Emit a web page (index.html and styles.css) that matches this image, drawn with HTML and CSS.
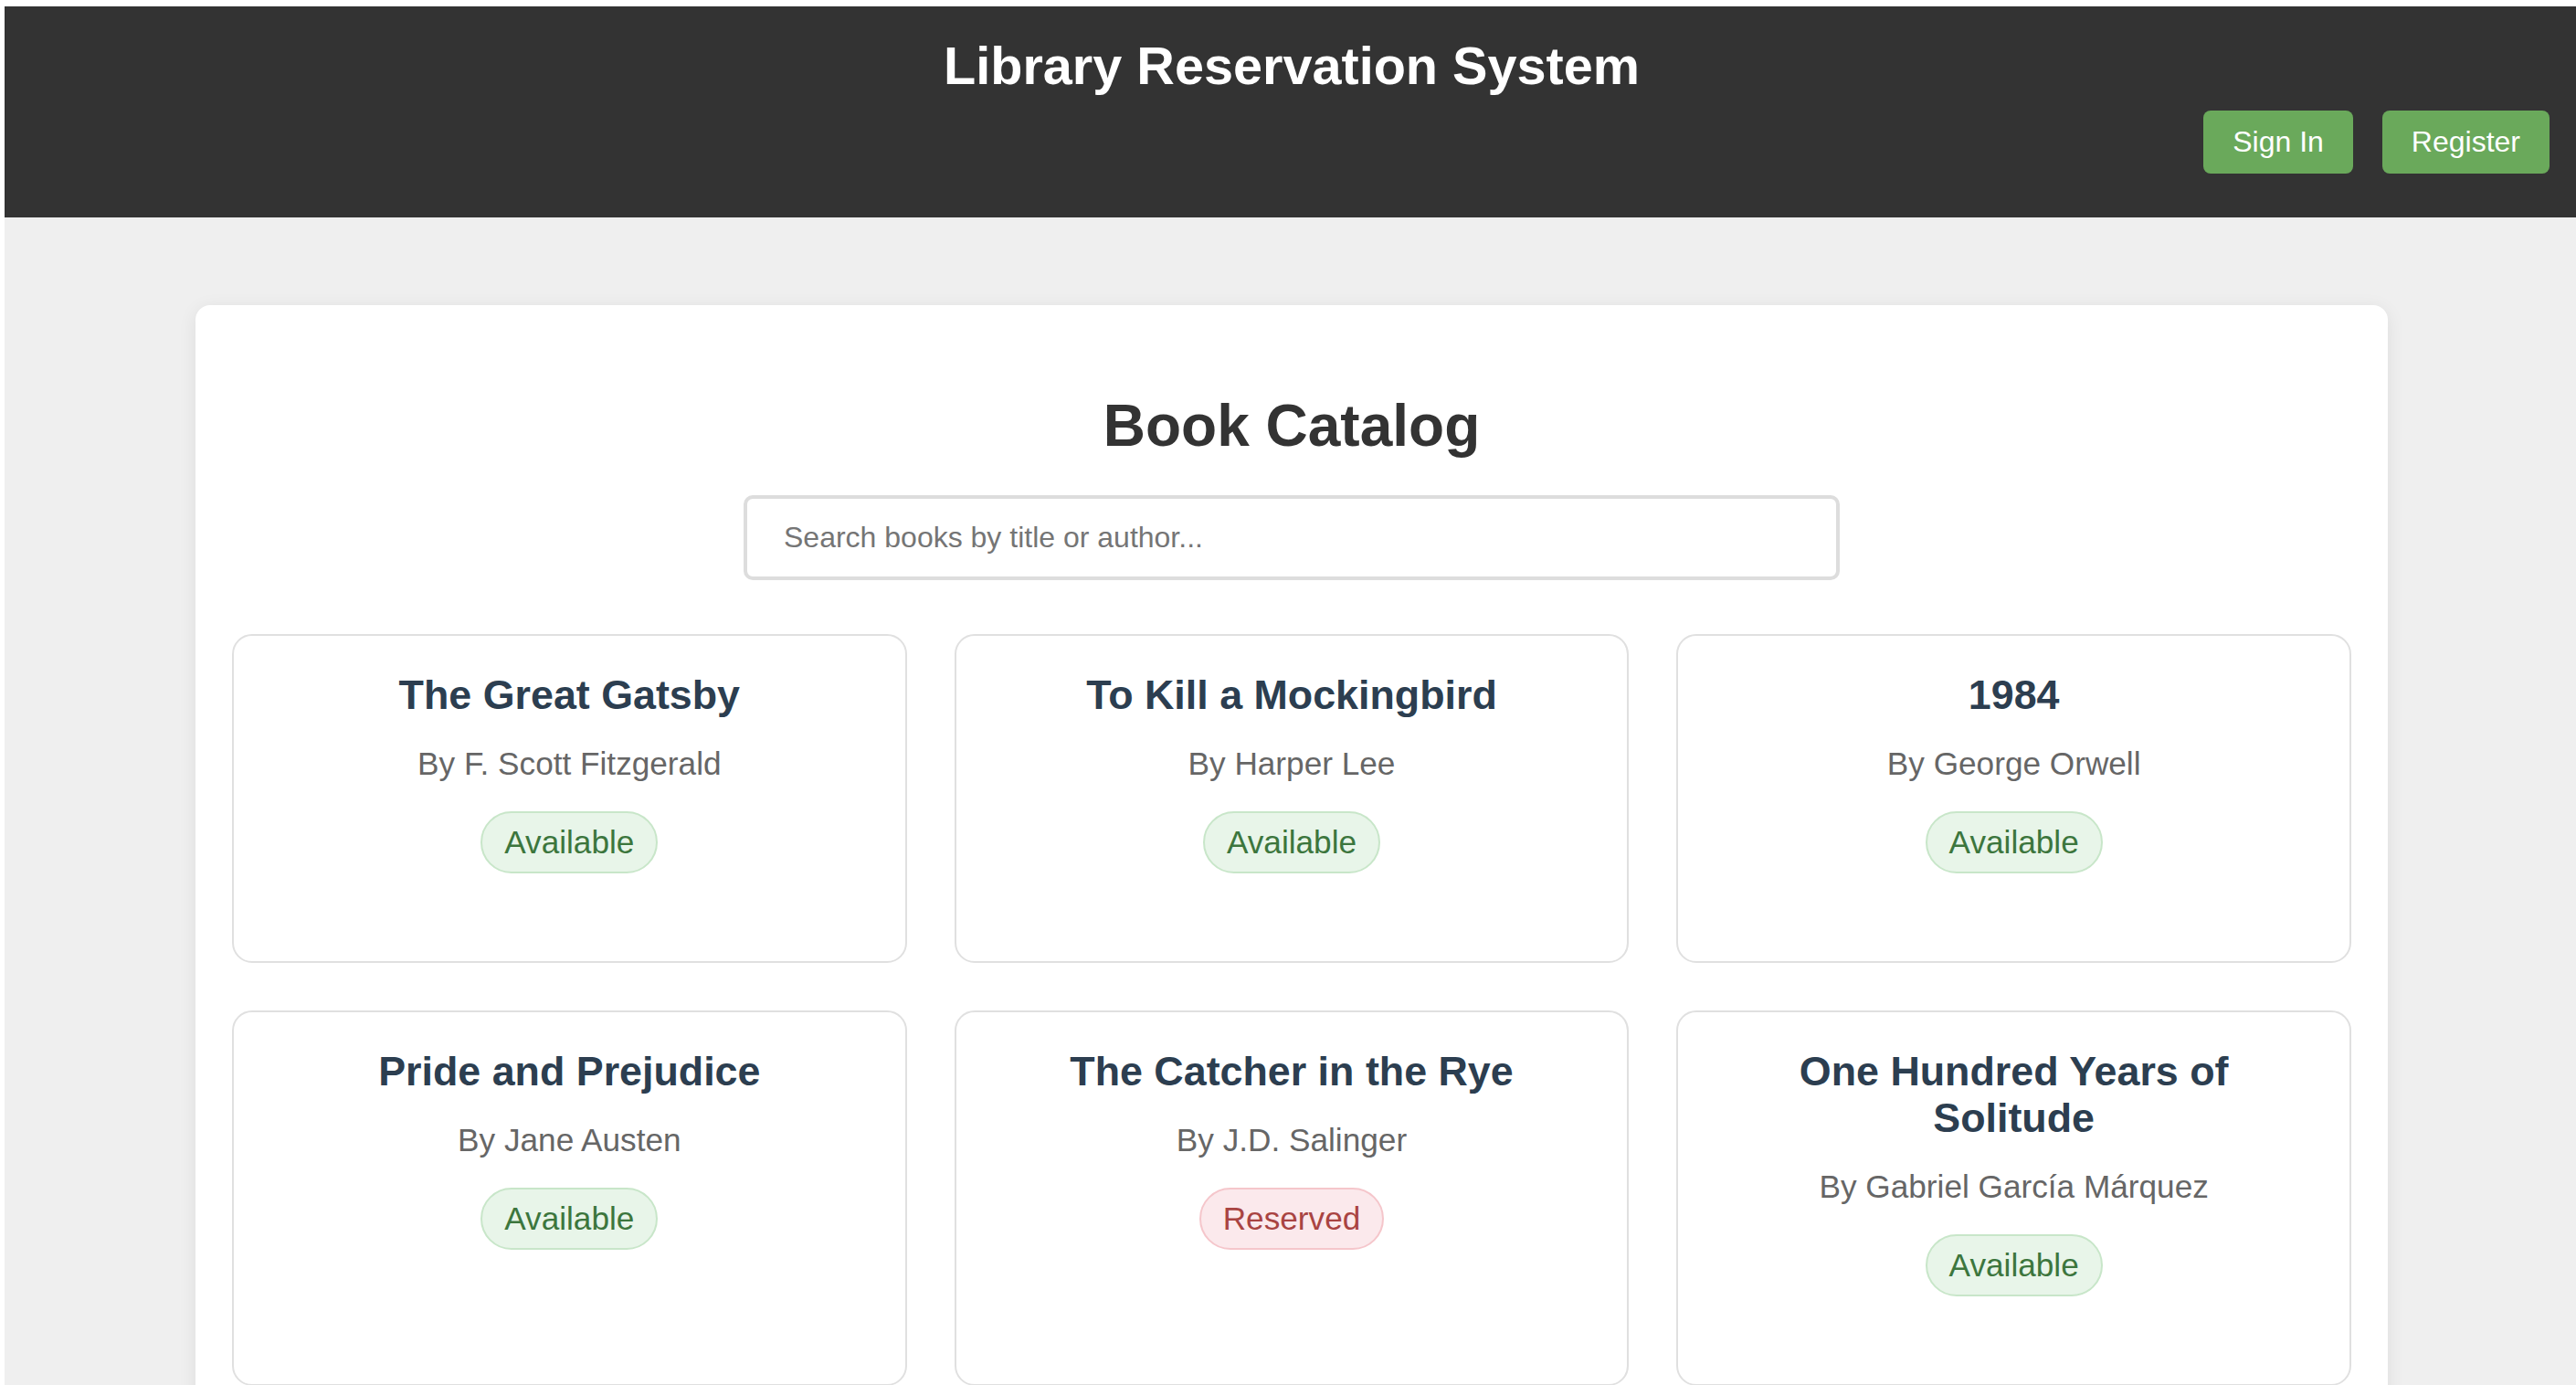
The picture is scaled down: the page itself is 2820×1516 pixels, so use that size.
FILE: index.html
```html
<!DOCTYPE html>
<html lang="en">
<head>
<meta charset="utf-8">
<title>Library Reservation System</title>
<link rel="stylesheet" href="styles.css">
</head>
<body>
<header class="site-header">
  <h1 class="site-title">Library Reservation System</h1>
  <nav class="auth-nav">
    <button class="btn">Sign In</button>
    <button class="btn">Register</button>
  </nav>
</header>
<div class="page">
<main class="container">
  <h2 class="catalog-title">Book Catalog</h2>
  <input class="search" type="text" placeholder="Search books by title or author...">
  <div class="book-grid">
    <div class="book-card">
      <h3 class="book-title">The Great Gatsby</h3>
      <p class="book-author">By F. Scott Fitzgerald</p>
      <span class="status status-available">Available</span>
    </div>
    <div class="book-card">
      <h3 class="book-title">To Kill a Mockingbird</h3>
      <p class="book-author">By Harper Lee</p>
      <span class="status status-available">Available</span>
    </div>
    <div class="book-card">
      <h3 class="book-title">1984</h3>
      <p class="book-author">By George Orwell</p>
      <span class="status status-available">Available</span>
    </div>
    <div class="book-card">
      <h3 class="book-title">Pride and Prejudice</h3>
      <p class="book-author">By Jane Austen</p>
      <span class="status status-available">Available</span>
    </div>
    <div class="book-card">
      <h3 class="book-title">The Catcher in the Rye</h3>
      <p class="book-author">By J.D. Salinger</p>
      <span class="status status-reserved">Reserved</span>
    </div>
    <div class="book-card">
      <h3 class="book-title">One Hundred Years of Solitude</h3>
      <p class="book-author">By Gabriel García Márquez</p>
      <span class="status status-available">Available</span>
    </div>
  </div>
</main>
</div>
</body>
</html>
```

FILE: styles.css
```css
html {
  background: #ffffff;
}

body {
  margin: 7px 0 0 5px;
  min-height: calc(100vh - 7px);
  background: #efefef;
  font-family: "Liberation Sans", Arial, sans-serif;
  color: #333333;
}

.site-header {
  background: #333333;
  color: #ffffff;
  padding: 32px 29px 48px 32px;
  display: flex;
  flex-direction: column;
}

.site-title {
  margin: 0;
  font-size: 57.6px;
  font-weight: bold;
  text-align: center;
  line-height: normal;
}

.auth-nav {
  margin-top: 16px;
  display: flex;
  justify-content: flex-end;
  gap: 32px;
}

.btn {
  font-family: "Liberation Sans", Arial, sans-serif;
  font-size: 32px;
  line-height: normal;
  color: #ffffff;
  background: #6aa95b;
  border: none;
  border-radius: 8px;
  padding: 16px 32px;
}

.page {
  padding-left: 3px;
}

.container {
  width: 2400px;
  box-sizing: border-box;
  margin: 96px auto 0;
  padding: 40px;
  background: #ffffff;
  border-radius: 16px;
  box-shadow: 0 4px 20px rgba(0, 0, 0, 0.08);
}

.catalog-title {
  margin: 55px 0 39px;
  font-size: 64px;
  font-weight: bold;
  text-align: center;
  color: #333333;
  line-height: normal;
}

.search {
  display: block;
  box-sizing: border-box;
  width: 1200px;
  margin: 0 auto 59px;
  padding: 24px 40px;
  border: 4px solid #dddddd;
  border-radius: 10px;
  font-family: "Liberation Sans", Arial, sans-serif;
  font-size: 32px;
  line-height: normal;
  color: #333333;
  outline: none;
}

.search::placeholder {
  color: #757575;
}

.book-grid {
  display: grid;
  grid-template-columns: repeat(3, 1fr);
  gap: 52px;
}

.book-card {
  border: 2px solid #e0e0e0;
  border-radius: 22px;
  padding: 39px 40px 96px;
  display: flex;
  flex-direction: column;
  align-items: center;
  text-align: center;
  background: #ffffff;
}

.book-title {
  margin: 0 0 30px;
  font-size: 44.8px;
  font-weight: bold;
  color: #2c3e50;
  line-height: normal;
}

.book-author {
  margin: 0 0 32px;
  font-size: 35.2px;
  color: #666666;
  line-height: normal;
}

.status {
  display: inline-block;
  padding: 12px 24px;
  border-radius: 999px;
  font-size: 35.2px;
  line-height: normal;
}

.status-available {
  background: #e8f5e9;
  border: 2px solid #c8e6c9;
  color: #3c763d;
}

.status-reserved {
  background: #fbe9ec;
  border: 2px solid #f5c6cb;
  color: #a94442;
}
```
